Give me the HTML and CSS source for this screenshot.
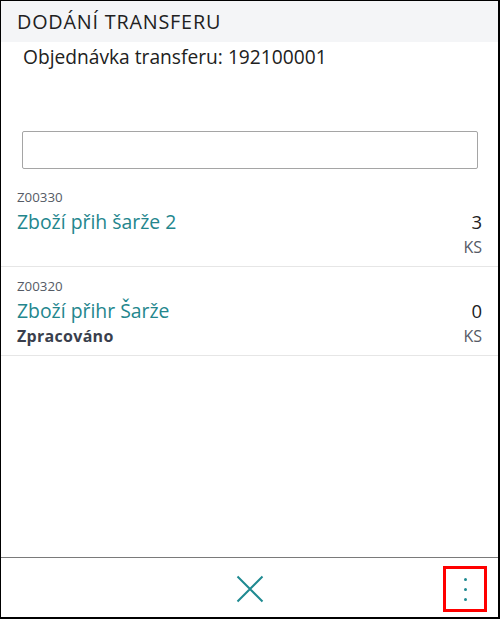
FILE: index.html
```html
<!DOCTYPE html>
<html>

<head>
    <title>Dodání transferu</title>
    <link rel="stylesheet" href="styles.css">
</head>

<body>
    <div class="app">
        <div class="header">DODÁNÍ TRANSFERU</div>
        <div class="subtitle">Objednávka transferu: 192100001</div>

        <div class="search">
            <input type="text" class="search-input">
        </div>

        <div class="lines">
            <div class="line">
                <div class="code">Z00330</div>
                <div class="spare"></div>
                <div class="name">Zboží přih šarže 2</div>
                <div class="qty">3</div>
                <div class="status"></div>
                <div class="unit">KS</div>
            </div>

            <div class="line">
                <div class="code">Z00320</div>
                <div class="spare"></div>
                <div class="name">Zboží přihr Šarže</div>
                <div class="qty">0</div>
                <div class="status">Zpracováno</div>
                <div class="unit">KS</div>
            </div>
        </div>

        <div class="footer">
            <div></div>
            <button class="btn-close">
                <svg width="28" height="28" viewBox="0 0 28 28">
                    <path d="M1.5 1.5 L26.5 26.5 M26.5 1.5 L1.5 26.5" stroke="#1f8a91" stroke-width="2" fill="none"/>
                </svg>
            </button>
            <button class="btn-more">
                <span class="dot"></span>
                <span class="dot"></span>
                <span class="dot"></span>
            </button>
        </div>
    </div>
</body>

</html>
```

FILE: styles.css
```css
html, body {
    margin: 0;
    height: 100%;
}

body {
    font-family: "Open Sans", "Noto Sans", sans-serif;
    color: #212121;
    background: white;
}

.app {
    box-sizing: border-box;
    height: 619px;
    border: solid #000;
    border-width: 1px 2px 2px 1px;
    display: flex;
    flex-direction: column;
}

.header {
    background: #f4f5f7;
    height: 41px;
    line-height: 41px;
    padding-left: 16px;
    font-size: 19.8px;
    letter-spacing: 0.8px;
}

.subtitle {
    padding-left: 22px;
    height: 30px;
    line-height: 30px;
    font-size: 19.2px;
}

.search {
    padding: 59px 20px 0 21px;
}

.search-input {
    box-sizing: border-box;
    width: 100%;
    height: 38px;
    border: 1px solid #a5a5a5;
    border-radius: 2px;
    font-size: 16px;
}

.lines {
    flex: 1;
    padding-top: 9px;
}

.line {
    display: grid;
    grid-template-columns: 1fr auto;
    grid-template-rows: 20px 30px 20px;
    padding: 9px 16px 9px 16px;
    border-bottom: 1px solid #e6e6e6;
}

.code {
    font-size: 13.3px;
    line-height: 20px;
    color: #555b66;
}

.name {
    font-size: 19.4px;
    line-height: 30px;
    color: #23868d;
}

.qty {
    font-size: 18.5px;
    line-height: 30px;
    text-align: right;
    color: #212121;
}

.status {
    font-size: 16px;
    line-height: 20px;
    font-weight: bold;
    color: #3a3f4d;
    letter-spacing: 0.3px;
}

.unit {
    font-size: 16px;
    line-height: 20px;
    text-align: right;
    color: #555b66;
}

.footer {
    height: 59px;
    border-top: 1px solid #7a7a7a;
    display: grid;
    grid-template-columns: 1fr auto 1fr;
    align-items: center;
}

.footer button {
    background: none;
    border: none;
    padding: 0;
    cursor: pointer;
}

.btn-close {
    width: 28px;
    height: 28px;
    margin-top: 3px;
}

.btn-close svg {
    display: block;
}

.btn-more {
    justify-self: end;
    margin-right: 11px;
    margin-top: 3px;
    width: 44px;
    height: 46px;
    box-sizing: border-box;
    border: 3px solid #ff0000 !important;
    display: flex;
    flex-direction: column;
    align-items: center;
    justify-content: center;
    gap: 7px;
}

.dot {
    width: 3px;
    height: 3px;
    border-radius: 50%;
    background: #1f8a91;
}
```
